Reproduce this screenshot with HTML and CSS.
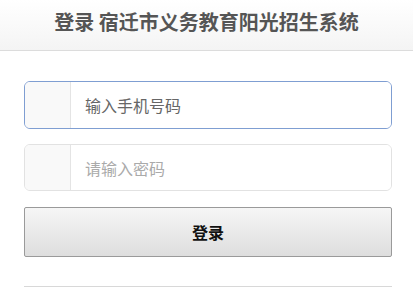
FILE: index.html
```html
<!DOCTYPE html>
<html lang="zh-CN">
<head>
  <meta charset="UTF-8">
  <meta name="viewport" content="width=device-width, initial-scale=1.0">
  <title>登录 宿迁市义务教育阳光招生系统</title>
  <link rel="stylesheet" href="styles.css">
</head>
<body>
  <header class="header">
    <h1>登录 宿迁市义务教育阳光招生系统</h1>
  </header>

  <form class="login-form">
    <div class="field field-active">
      <span class="field-addon"></span>
      <input type="text" placeholder="输入手机号码" class="phone-input">
    </div>
    <div class="field">
      <span class="field-addon"></span>
      <input type="password" placeholder="请输入密码">
    </div>
    <button type="button" class="login-btn">登录</button>
    <hr class="divider">
  </form>
</body>
</html>
```

FILE: styles.css
```css
* {
  box-sizing: border-box;
}

body {
  margin: 0;
  padding: 0;
  background: #fff;
  font-family: "Noto Sans CJK SC", "Noto Sans", sans-serif;
}

.header {
  height: 51px;
  background: linear-gradient(#fff, #f4f4f4);
  border-bottom: 1px solid #dcdcdc;
  display: flex;
  align-items: center;
  justify-content: center;
}

.header h1 {
  margin: 0;
  font-size: 20px;
  font-weight: bold;
  color: #555;
  margin-top: -8px;
}

.login-form {
  padding: 30px 21px 0 24px;
  display: flex;
  flex-direction: column;
}

.field {
  display: flex;
  height: 47px;
  border: 1px solid #e2e2e2;
  border-radius: 6px;
  overflow: hidden;
  margin-bottom: 16px;
  background: #fff;
}

.field-active {
  height: 48px;
  border-color: #7f9ed2;
  margin-bottom: 15px;
}

.field-addon {
  width: 46px;
  flex: none;
  background: #f9f9f9;
  border-right: 1px solid #e4e4e4;
}

.field input {
  flex: 1;
  min-width: 0;
  border: none;
  outline: none;
  padding: 0 14px;
  font-family: inherit;
  font-size: 16px;
  background: #fff;
}

.field input::placeholder {
  color: #aaa;
}

.field input.phone-input::placeholder {
  color: #666;
}

.login-btn {
  height: 50px;
  border: 1px solid #9a9a9a;
  border-radius: 2px;
  background: linear-gradient(#f6f6f6, #dedede);
  font-family: inherit;
  font-size: 16px;
  font-weight: bold;
  color: #111;
  cursor: pointer;
}

.divider {
  margin: 29px 0 0;
  border: none;
  border-top: 1px solid #d8d8d8;
}
```
